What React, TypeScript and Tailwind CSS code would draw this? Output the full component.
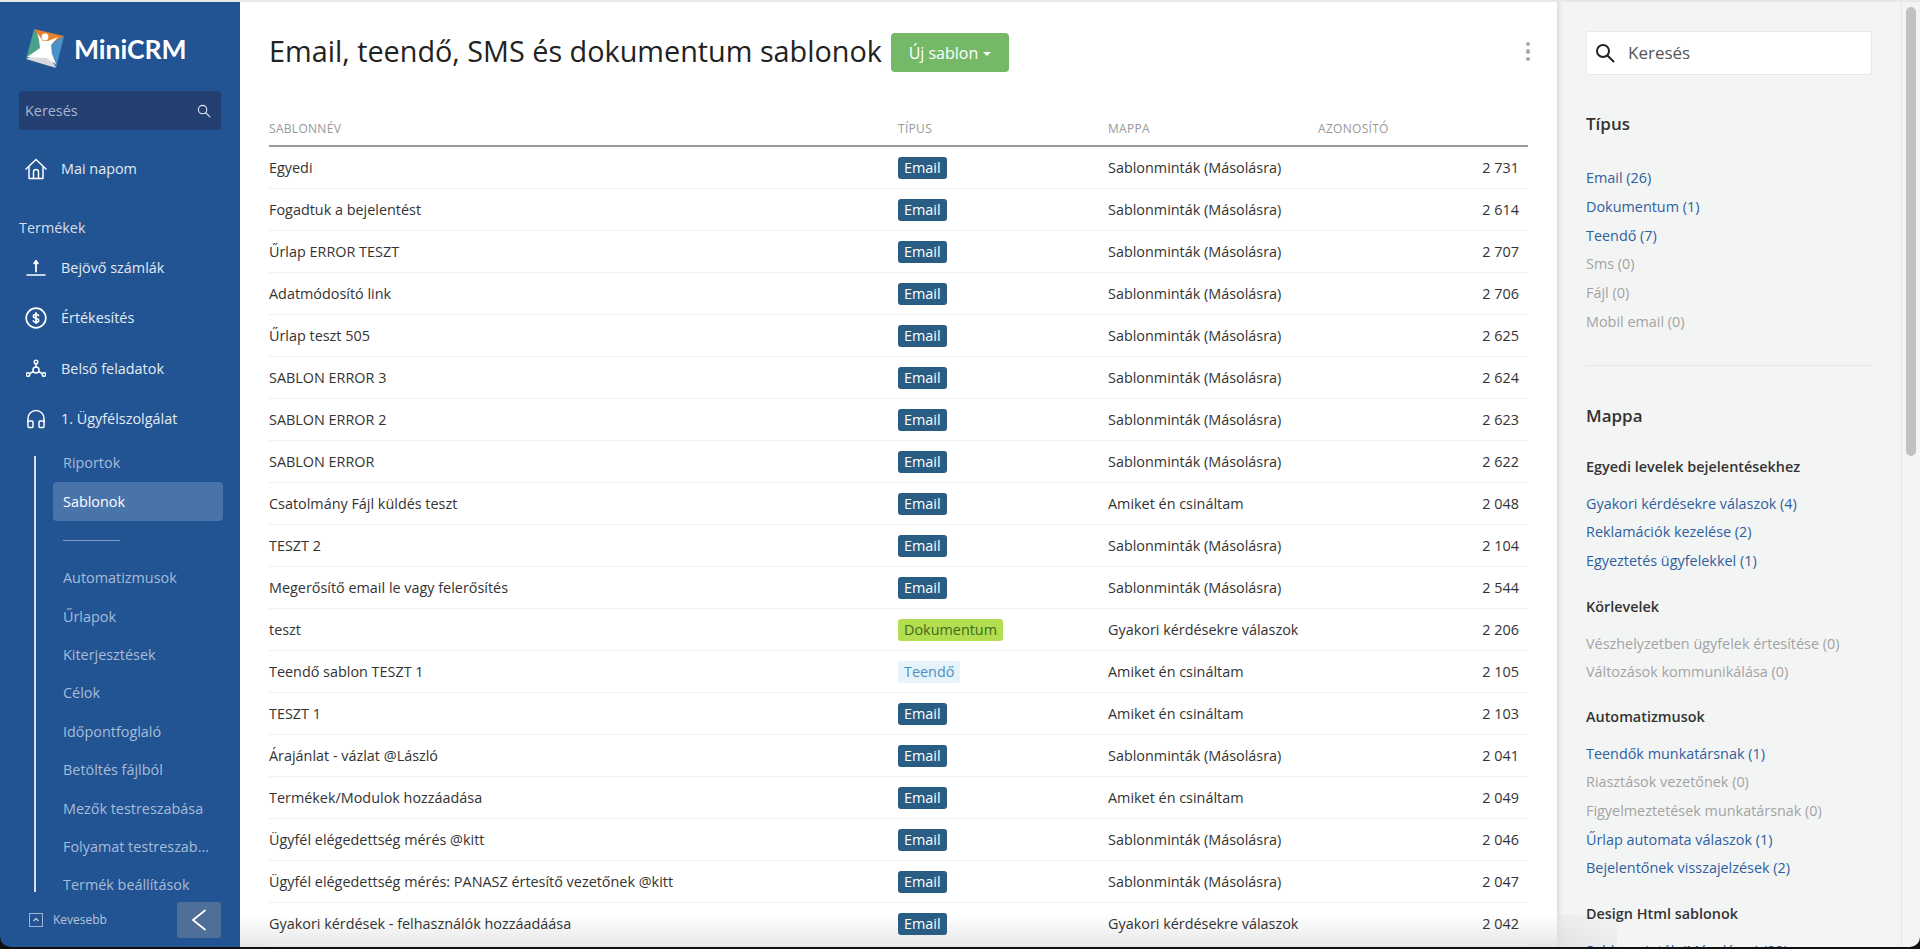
import React from "react";

const rows: [string, "Email" | "Dokumentum" | "Teendő", string, string][] = [
  ["Egyedi", "Email", "Sablonminták (Másolásra)", "2 731"],
  ["Fogadtuk a bejelentést", "Email", "Sablonminták (Másolásra)", "2 614"],
  ["Űrlap ERROR TESZT", "Email", "Sablonminták (Másolásra)", "2 707"],
  ["Adatmódosító link", "Email", "Sablonminták (Másolásra)", "2 706"],
  ["Űrlap teszt 505", "Email", "Sablonminták (Másolásra)", "2 625"],
  ["SABLON ERROR 3", "Email", "Sablonminták (Másolásra)", "2 624"],
  ["SABLON ERROR 2", "Email", "Sablonminták (Másolásra)", "2 623"],
  ["SABLON ERROR", "Email", "Sablonminták (Másolásra)", "2 622"],
  ["Csatolmány Fájl küldés teszt", "Email", "Amiket én csináltam", "2 048"],
  ["TESZT 2", "Email", "Sablonminták (Másolásra)", "2 104"],
  ["Megerősítő email le vagy felerősítés", "Email", "Sablonminták (Másolásra)", "2 544"],
  ["teszt", "Dokumentum", "Gyakori kérdésekre válaszok", "2 206"],
  ["Teendő sablon TESZT 1", "Teendő", "Amiket én csináltam", "2 105"],
  ["TESZT 1", "Email", "Amiket én csináltam", "2 103"],
  ["Árajánlat - vázlat @László", "Email", "Sablonminták (Másolásra)", "2 041"],
  ["Termékek/Modulok hozzáadása", "Email", "Amiket én csináltam", "2 049"],
  ["Ügyfél elégedettség mérés @kitt", "Email", "Sablonminták (Másolásra)", "2 046"],
  ["Ügyfél elégedettség mérés: PANASZ értesítő vezetőnek @kitt", "Email", "Sablonminták (Másolásra)", "2 047"],
  ["Gyakori kérdések - felhasználók hozzáadáása", "Email", "Gyakori kérdésekre válaszok", "2 042"],
];

function Badge({ type }: { type: string }) {
  if (type === "Dokumentum")
    return <span className="inline-flex h-[22px] items-center rounded-[3px] bg-[#b2de50] px-[6px] text-[#3f6b1c]">{type}</span>;
  if (type === "Teendő")
    return <span className="inline-flex h-[22px] items-center rounded-[3px] bg-[#e6f3fb] px-[6px] text-[#4a8fc4]">{type}</span>;
  return <span className="inline-flex h-[22px] items-center rounded-[3px] bg-[#2a5d84] px-[6px] text-white">{type}</span>;
}

const ic = { fill: "none", stroke: "currentColor", strokeWidth: 1.5, strokeLinecap: "round", strokeLinejoin: "round" } as const;

function HomeIcon() {
  return (
    <svg width="22" height="22" viewBox="0 0 22 22" {...ic}>
      <path d="M1 11 11 1.5 21 11" />
      <path d="M4 9v11.5h14V9" />
      <path d="M8.5 20.5v-6.5a2.5 2.5 0 0 1 5 0v6.5" />
    </svg>
  );
}
function UploadIcon() {
  return (
    <svg width="20" height="20" viewBox="0 0 20 20" {...ic}>
      <path d="M10 13.5V4" strokeWidth="1.8" />
      <path d="M8 5.5 10 2.5l2 3z" fill="currentColor" />
      <path d="M1 17h18" />
    </svg>
  );
}
function DollarIcon() {
  return (
    <svg width="22" height="22" viewBox="0 0 22 22" {...ic} strokeWidth={1.7}>
      <circle cx="11" cy="11" r="9.8" />
      <path d="M13.6 8.6c-.5-.9-1.4-1.3-2.6-1.3-1.5 0-2.6.7-2.6 1.9 0 2.6 5.3 1.4 5.3 4 0 1.2-1.2 2-2.7 2-1.2 0-2.2-.4-2.8-1.3" />
      <path d="M11 5.8v10.4" />
    </svg>
  );
}
function NetworkIcon() {
  return (
    <svg width="20" height="20" viewBox="0 0 20 20" {...ic}>
      <circle cx="10" cy="3" r="1.8" />
      <circle cx="10" cy="11" r="3" />
      <circle cx="2" cy="15.5" r="1.8" />
      <circle cx="18" cy="15.5" r="1.8" />
      <path d="M10 4.8V8M3.6 14.6 7.4 12.5M16.4 14.6 12.6 12.5" />
    </svg>
  );
}
function HeadIcon() {
  return (
    <svg width="20" height="20" viewBox="0 0 20 20" {...ic}>
      <path d="M2 13V9.5a8 8 0 0 1 16 0V13" />
      <rect x="2" y="12" width="5" height="6.5" rx="1" />
      <rect x="13" y="12" width="5" height="6.5" rx="1" />
    </svg>
  );
}
function Logo() {
  return (
    <svg width="42" height="42" viewBox="0 0 42 42" className="shrink-0">
      <polygon points="10,1 40,8 21,20" fill="#e5822f" />
      <polygon points="40,8 32,40 21,20" fill="#4c92c9" />
      <polygon points="32,40 2,31 21,20" fill="#d9dadc" />
      <polygon points="2,31 10,1 21,20" fill="#4aa08a" />
      <path d="M13 5 19 13h5l10-4-7 8 1 9 4 10-10-6-19-1 13-9-1-8z" fill="#fff" />
      <circle cx="21" cy="9" r="3.4" fill="#fff" />
    </svg>
  );
}
function SearchIcon({ size, w }: { size: number; w: number }) {
  return (
    <svg width={size} height={size} viewBox="0 0 20 20" fill="none" stroke="currentColor" strokeWidth={w} strokeLinecap="round">
      <circle cx="8" cy="8" r="6" />
      <path d="m12.5 12.5 6 6" />
    </svg>
  );
}

function NavMain({ icon, label, className }: { icon: React.ReactNode; label: string; className: string }) {
  return (
    <div className={`flex h-[24px] shrink-0 items-center text-[#e3ebf5] ${className}`}>
      <div className="ml-[25px] mr-[14px] flex w-[22px] shrink-0 justify-center text-white">{icon}</div>
      <span>{label}</span>
    </div>
  );
}

const subItems = ["Automatizmusok", "Űrlapok", "Kiterjesztések", "Célok", "Időpontfoglaló", "Betöltés fájlból", "Mezők testreszabása", "Folyamat testreszab...", "Termék beállítások"];

function Sidebar() {
  return (
    <aside className="flex h-full w-[240px] shrink-0 flex-col overflow-hidden rounded-bl-[10px] bg-[#225392] text-[14.4px] shadow-[2px_0_4px_rgba(0,0,0,0.3)]">
      <div className="mt-[26px] flex h-[42px] shrink-0 items-center gap-[8px] pl-[24px]">
        <Logo />
        <span className="font-['Lato',sans-serif] text-[26.5px] font-bold leading-none text-white">MiniCRM</span>
      </div>
      <div className="mx-[19px] mt-[21px] flex h-[39px] shrink-0 items-center justify-between rounded-[4px] bg-[#243f72] pl-[6px] pr-[10px] text-[#a9b6cb]">
        <span>Keresés</span>
        <span className="text-[#dfe6f0]"><SearchIcon size={14} w={1.6} /></span>
      </div>
      <NavMain icon={<HomeIcon />} label="Mai napom" className="mt-[27px]" />
      <div className="mt-[36px] h-[22px] shrink-0 pl-[19px] leading-[22px] text-[#d5dfec]">Termékek</div>
      <NavMain icon={<UploadIcon />} label="Bejövő számlák" className="mt-[17px]" />
      <NavMain icon={<DollarIcon />} label="Értékesítés" className="mt-[26px]" />
      <NavMain icon={<NetworkIcon />} label="Belső feladatok" className="mt-[27px]" />
      <NavMain icon={<HeadIcon />} label="1. Ügyfélszolgálat" className="mt-[26px]" />
      <div className="ml-[34px] mt-[25px] flex h-[436px] shrink-0 flex-col border-l-2 border-[#d8e2ee] pl-[17px] text-[#a7bcd9]">
        <div className="mt-[-5px] flex h-[24px] shrink-0 items-center pl-[10px]">Riportok</div>
        <div className="mt-[7px] flex h-[39px] w-[170px] shrink-0 items-center rounded-[4px] bg-[#4874aa] pl-[10px] text-white">Sablonok</div>
        <div className="ml-[10px] mt-[19px] h-[1px] w-[57px] shrink-0 bg-[#7f9cc2]" />
        {subItems.map((s, i) => (
          <div key={s} className={`flex h-[24px] shrink-0 items-center pl-[10px] ${i === 0 ? "mt-[25px]" : "mt-[14.4px]"}`}>{s}</div>
        ))}
      </div>
      <div className="mt-[10px] flex h-[36px] shrink-0 items-center pl-[29px] pr-[19px]">
        <span className="flex h-[14px] w-[14px] items-center justify-center border border-[#9db3d2] text-[#c9d6e7]">
          <svg width="8" height="6" viewBox="0 0 8 6" fill="none" stroke="currentColor" strokeWidth="1.2"><path d="m1.5 4 2.5-2.5L6.5 4" /></svg>
        </span>
        <span className="ml-[10px] text-[12px] text-[#b5c6de]">Kevesebb</span>
        <span className="ml-auto flex h-[36px] w-[44px] items-center justify-center rounded-[2px] bg-[#4f6e9a] text-white">
          <svg width="16" height="24" viewBox="0 0 16 24" fill="none" stroke="currentColor" strokeWidth="1.8"><path d="M14.5 2 2 12l12.5 10" /></svg>
        </span>
      </div>
    </aside>
  );
}

function Main() {
  return (
    <main className="relative min-w-0 flex-1 overflow-hidden bg-white pl-[29px] pr-[29px] text-[14.4px] text-[#333]">
      <div className="absolute inset-x-0 bottom-0 h-[32px] bg-gradient-to-b from-transparent to-[#e6e6e6]" />
      <div className="relative">
        <div className="mt-[31px] flex h-[39px] items-center">
          <h1 className="mt-[-2px] text-[28.8px] font-normal leading-none text-[#222]">Email, teendő, SMS és dokumentum sablonok</h1>
          <button className="ml-[9px] flex h-[39px] w-[118px] items-center justify-center gap-[5px] rounded-[4px] bg-[#74b868] text-[16px] text-white">
            Új sablon
            <span className="mt-[2px] h-0 w-0 border-x-[4px] border-t-[4px] border-x-transparent border-t-white" />
          </button>
          <div className="ml-auto mr-[-2px] mt-[-2px] flex flex-col gap-[3px]">
            <span className="h-[4.5px] w-[4.5px] rounded-full bg-[#aaa]" />
            <span className="h-[4.5px] w-[4.5px] rounded-full bg-[#aaa]" />
            <span className="h-[4.5px] w-[4.5px] rounded-full bg-[#aaa]" />
          </div>
        </div>
        <div className="mt-[48px] grid h-[27px] grid-cols-[629px_210px_210px_211px] border-b-2 border-[#999] text-[12px] tracking-[0.3px] text-[#999]">
          <span className="leading-[18px]">SABLONNÉV</span>
          <span className="leading-[18px]">TÍPUS</span>
          <span className="leading-[18px]">MAPPA</span>
          <span className="leading-[18px]">AZONOSÍTÓ</span>
        </div>
        {rows.map((r) => (
          <div key={r[3]} className="grid h-[42px] grid-cols-[629px_210px_210px_211px] items-center border-b border-[#f0f0f0]">
            <span className="whitespace-nowrap">{r[0]}</span>
            <span><Badge type={r[1]} /></span>
            <span className="whitespace-nowrap">{r[2]}</span>
            <span className="pr-[10px] text-right">{r[3]}</span>
          </div>
        ))}
      </div>
    </main>
  );
}

function Group({ title, items, className }: { title: string; items: [string, boolean][]; className: string }) {
  return (
    <div className={className}>
      <div className="h-[20px] font-semibold leading-[20px] text-[#333]">{title}</div>
      <div className="mt-[13px] flex flex-col">
        {items.map(([t, on]) => (
          <div key={t} className={`h-[28.6px] leading-[28.6px] ${on ? "text-[#2f5f9e]" : "text-[#a3a3a3]"}`}>{t}</div>
        ))}
      </div>
    </div>
  );
}

function Filters() {
  return (
    <section className="relative h-full w-[344px] shrink-0 overflow-hidden bg-[#f3f5f5] pl-[29px] pr-[29px] text-[14.4px] shadow-[inset_6px_0_5px_-4px_rgba(0,0,0,0.12)]">
      <div className="absolute bottom-0 left-0 h-[32px] w-[60px] bg-gradient-to-tr from-[#e2e2e2] to-transparent" />
      <div className="relative">
        <div className="mt-[29px] flex h-[44px] items-center rounded-[2px] border border-[#e8e8e8] bg-white pl-[8px] text-[17px] text-[#555]">
          <span className="text-[#222]"><SearchIcon size={20} w={2} /></span>
          <span className="ml-[13px]">Keresés</span>
        </div>
        <div className="mt-[37px] h-[24px] text-[17px] font-semibold leading-[24px] text-[#333]">Típus</div>
        <div className="mt-[28px] flex flex-col">
          {([["Email (26)", 1], ["Dokumentum (1)", 1], ["Teendő (7)", 1], ["Sms (0)", 0], ["Fájl (0)", 0], ["Mobil email (0)", 0]] as [string, number][]).map(([t, on]) => (
            <div key={t} className={`h-[28.8px] leading-[28.8px] ${on ? "text-[#2f5f9e]" : "text-[#a3a3a3]"}`}>{t}</div>
          ))}
        </div>
        <div className="mt-[28px] h-[1px] bg-[#e6e8e8]" />
        <div className="mt-[38px] h-[24px] text-[17px] font-semibold leading-[24px] text-[#333]">Mappa</div>
        <Group className="mt-[29px]" title="Egyedi levelek bejelentésekhez" items={[["Gyakori kérdésekre válaszok (4)", true], ["Reklamációk kezelése (2)", true], ["Egyeztetés ügyfelekkel (1)", true]]} />
        <Group className="mt-[21px]" title="Körlevelek" items={[["Vészhelyzetben ügyfelek értesítése (0)", false], ["Változások kommunikálása (0)", false]]} />
        <Group className="mt-[20px]" title="Automatizmusok" items={[["Teendők munkatársnak (1)", true], ["Riasztások vezetőnek (0)", false], ["Figyelmeztetések munkatársnak (0)", false], ["Űrlap automata válaszok (1)", true], ["Bejelentőnek visszajelzések (2)", true]]} />
        <Group className="mt-[21px]" title="Design Html sablonok" items={[["Sablonminták (Másolásra) (22)", true]]} />
      </div>
    </section>
  );
}

export default function App() {
  return (
    <div className="flex h-[949px] w-[1920px] flex-col overflow-hidden bg-[#111] font-['Open_Sans',sans-serif]">
      <div className="h-[2px] shrink-0 bg-[#e8e8e8]" />
      <div className="flex h-[945px] overflow-hidden rounded-b-[10px]">
        <Sidebar />
        <Main />
        <Filters />
        <div className="flex h-full w-[19px] shrink-0 justify-center border-l border-[#e8e8e8] bg-[#f4f4f4] pt-[5px]">
          <div className="h-[449px] w-[10px] rounded-[5px] bg-[#c1c1c1]" />
        </div>
      </div>
    </div>
  );
}
